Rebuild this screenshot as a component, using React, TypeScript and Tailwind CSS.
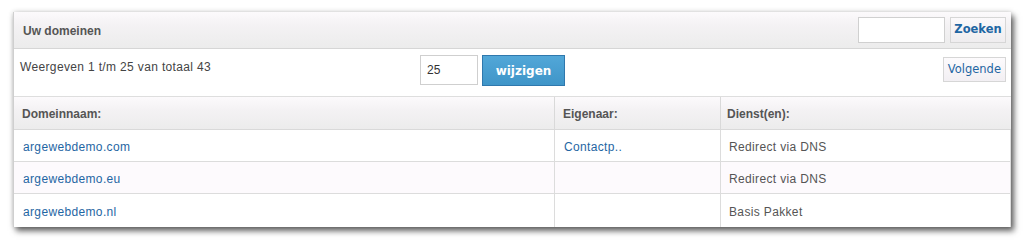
import React from "react";

const rows = [
  { d: "argewebdemo.com", o: "Contactp..", s: "Redirect via DNS", alt: false },
  { d: "argewebdemo.eu", o: "", s: "Redirect via DNS", alt: true },
  { d: "argewebdemo.nl", o: "", s: "Basis Pakket", alt: false },
];

const verdana = { fontFamily: '"DejaVu Sans", Verdana, sans-serif' };

export default function App() {
  return (
    <div
      className="w-[1031px] h-[248px] bg-white pt-[12px] pl-[13px]"
      style={{ fontFamily: '"Liberation Sans", Arial, sans-serif' }}
    >
      <div className="w-[998px] h-[215px] bg-white border-l border-[#cfcfcf] shadow-[3px_4px_6px_rgba(0,0,0,0.6),0_0_5px_rgba(0,0,0,0.18)] flex flex-col">
        {/* header */}
        <div className="h-[37px] flex items-center justify-between pl-[9px] pr-[5px] bg-[linear-gradient(#fcfafc_0%,#f4f2f4_35%,#ececec_100%)] border-b border-[#d6d6d6]">
          <span className="text-[12px] font-bold text-[#555] mt-[2px]">Uw domeinen</span>
          <div className="flex items-center gap-[5px]">
            <div className="w-[87px] h-[26px] bg-white border border-[#d0d0d0]" />
            <div className="w-[56px] h-[26px] border border-[#d6d6d6] bg-[linear-gradient(#fbf9fb,#efedef)] flex items-center justify-center">
              <span className="text-[11.5px] font-bold text-[#1f66a3]" style={verdana}>
                Zoeken
              </span>
            </div>
          </div>
        </div>
        {/* pager */}
        <div className="h-[48px] flex items-start pl-[6px] pr-[5px] border-b border-[#dedede]">
          <span className="text-[12px] tracking-[0.35px] text-[#444] mt-[9px] w-[400px]">Weergeven 1 t/m 25 van totaal 43</span>
          <div className="flex items-start gap-[4px] mt-[6px]">
            <div className="w-[58px] h-[30px] border border-[#cfcfcf] bg-white flex items-center pl-[6px]">
              <span className="text-[12px] text-[#333]">25</span>
            </div>
            <div className="w-[83px] h-[31px] bg-[linear-gradient(#52a7d8,#3f95c8)] border border-[#2f78ad] flex items-center justify-center">
              <span className="text-[12px] font-bold text-white" style={verdana}>
                wijzigen
              </span>
            </div>
          </div>
          <div className="ml-auto mt-[8px] h-[25px] px-[4px] border border-[#d6d6d6] bg-[linear-gradient(#fdfbfd,#f2eff3)] flex items-center">
            <span className="text-[11.5px] text-[#1f66a3]" style={verdana}>
              Volgende
            </span>
          </div>
        </div>
        {/* table */}
        <div className="grid grid-cols-[540px_166px_1fr]">
          <div className="h-[33px] flex items-center pt-[1px] pl-[8px] bg-[linear-gradient(#fcfafc_0%,#f4f2f4_40%,#ececec_100%)] border-b border-[#d9d9d9] text-[12px] font-bold text-[#555]">Domeinnaam:</div>
          <div className="h-[33px] flex items-center pt-[1px] pl-[8px] bg-[linear-gradient(#fcfafc_0%,#f4f2f4_40%,#ececec_100%)] border-b border-l border-[#d9d9d9] text-[12px] font-bold text-[#555]">Eigenaar:</div>
          <div className="h-[33px] flex items-center pt-[1px] pl-[6px] bg-[linear-gradient(#fcfafc_0%,#f4f2f4_40%,#ececec_100%)] border-b border-l border-[#d9d9d9] text-[12px] font-bold text-[#555]">Dienst(en):</div>
          {rows.map((r, i) => {
            const h = i < 2 ? "h-[32px] border-b" : "h-[33px]";
            const bg = r.alt ? "bg-[#fdfafd]" : "bg-white";
            return (
              <React.Fragment key={i}>
                <div className={`${h} ${bg} flex items-center pt-[2px] pl-[9px] text-[12px] tracking-[0.35px] text-[#1f66a3] border-[#dcdcdc]`}>{r.d}</div>
                <div className={`${h} ${bg} flex items-center pt-[2px] pl-[9px] text-[12px] tracking-[0.35px] text-[#1f66a3] border-l border-[#dcdcdc]`}>{r.o}</div>
                <div className={`${h} ${bg} flex items-center pt-[2px] pl-[8px] text-[12px] tracking-[0.35px] text-[#555] border-l border-r border-[#dcdcdc]`}>{r.s}</div>
              </React.Fragment>
            );
          })}
        </div>
      </div>
    </div>
  );
}
